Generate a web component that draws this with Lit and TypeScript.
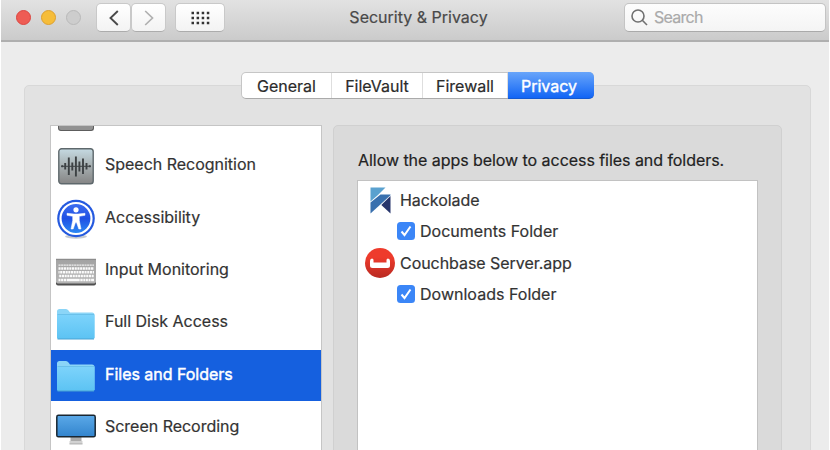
import { LitElement, html, css, svg } from "lit";
import { customElement } from "lit/decorators.js";
import { classMap } from "lit/directives/class-map.js";

const folder = (id: string) => html`<svg width="40" height="36" viewBox="0 0 40 36">
  <defs><linearGradient id=${id} x1="0" y1="0" x2="0" y2="1"><stop offset="0" stop-color="#7dd3fb"/><stop offset="1" stop-color="#5cc3f3"/></linearGradient></defs>
  <path d="M1 32V5.500Q1 3 3.500 3H10Q11.500 3 12.500 4.500L14 6.500H36Q38.500 6.500 38.500 9V32Z" fill="#8bd5f7"/>
  <path d="M1 8.500H38.500V31.500Q38.500 33 37 33H2.500Q1 33 1 31.500Z" fill="url(#${id})"/>
  <path d="M1.500 8.500H38" stroke="#65bce6" stroke-width=".8"/>
  <path d="M1.500 33H38" stroke="#4aa3d3" stroke-width="1"/>
</svg>`;

const speech = html`<svg width="36" height="37" viewBox="0 0 36 37">
  <defs><linearGradient id="sp" x1="0" y1="0" x2="0" y2="1"><stop offset="0" stop-color="#c5dae2"/><stop offset=".45" stop-color="#a9b2b4"/><stop offset="1" stop-color="#858585"/></linearGradient></defs>
  <rect x=".8" y=".8" width="34.400" height="35" rx="2.800" fill="url(#sp)" stroke="#5e686c" stroke-width="1.400"/>
  <path d="M3 18.300H33" stroke="#3d4244" stroke-width="1"/>
  <path d="M4.300 17.300V19.300M7.200 15V21.500M10.800 9.500V27M14.300 14.500V22.500M17.900 8.500V28.500M21.400 13.500V23.500M25 10.500V26M28.500 15V21.500M31.700 17.300V19.300" stroke="#3d4244" stroke-width="1.900"/>
</svg>`;

const accessibility = html`<svg width="40" height="40" viewBox="0 0 40 40">
  <defs><linearGradient id="ac" x1="0" y1="0" x2="0" y2="1"><stop offset="0" stop-color="#3f6ff0"/><stop offset=".5" stop-color="#1f50e4"/><stop offset="1" stop-color="#2c8cf4"/></linearGradient></defs>
  <ellipse cx="20" cy="37.500" rx="11" ry="2.200" fill="#8e97a5" opacity=".5"/>
  <circle cx="20" cy="19.500" r="18.800" fill="#2459df"/>
  <circle cx="20" cy="19.500" r="15.500" fill="url(#ac)" stroke="#fff" stroke-width="2.200"/>
  <circle cx="20" cy="10.800" r="2.600" fill="#fff"/>
  <path d="M11 14.300L18 15H22L29 14.300V16.300L23.300 17.300V21.500L25 30H22.800L20.500 23.500H19.500L17.200 30H15L16.700 21.500V17.300L11 16.300Z" fill="#fff" stroke="#fff" stroke-width=".5"/>
</svg>`;

const keyRow = (y: number, dash: string, off: number) =>
  svg`<path d="M2.500 ${y}H38" stroke="#fbfbfb" stroke-width="2.500" stroke-dasharray=${dash} stroke-dashoffset=${off}/>`;

const keyboard = html`<svg width="40" height="30" viewBox="0 -2 40 30">
  <defs><linearGradient id="kb" x1="0" y1="0" x2="0" y2="1"><stop offset="0" stop-color="#a3a3a3"/><stop offset="1" stop-color="#b5b5b5"/></linearGradient></defs>
  <rect x="0" y="2" width="40" height="25.500" rx="2" fill="#4f4f4f"/>
  <path d="M0 1.500H40V23.500Q40 25.500 38 25.500H2Q0 25.500 0 23.500Z" fill="url(#kb)"/>
  <path d="M0 1.300H40" stroke="#7b7b7b"/>
  <path d="M2.500 7.200H38" stroke="#eee" stroke-width="1.200" stroke-dasharray="2.100 .5"/>
  ${keyRow(10.6, "2.100 .6", 0)}${keyRow(14.3, "2.100 .6", 1)}${keyRow(18, "2.100 .6", 2)}
  <path d="M2.500 22H38" stroke="#fbfbfb" stroke-width="2.700" stroke-dasharray="2 .6 2 .6 2.400 .6 13 .6 2.400 .6 2 .6 2 .6 2 .6 3"/>
</svg>`;

const display = html`<svg width="40" height="33" viewBox="0 -2 40 33">
  <defs><linearGradient id="ds" x1="0" y1="0" x2="0" y2="1"><stop offset="0" stop-color="#5ba9e8"/><stop offset="1" stop-color="#3284cd"/></linearGradient></defs>
  <path d="M14.500 23H25.500V27H14.500Z" fill="#aaa"/><path d="M13.500 27H26.500V30H13.500Z" fill="#d2d2d2"/>
  <path d="M13.500 30H26.500" stroke="#999" stroke-width=".7"/>
  <rect x=".8" y="1.300" width="38.400" height="21.500" rx="1.600" fill="url(#ds)" stroke="#192631" stroke-width="1.500"/>
</svg>`;

const hackolade = html`<svg width="21" height="27" viewBox="0 0 21 27">
  <path d="M.5 .5H15.500L8 8L.5 14.500Z" fill="#5aa1cf"/>
  <path d="M.5 26.500V15.500L10.500 7.500H20.500V8.300Z" fill="#3970ae"/>
  <path d="M20.500 9V26.500L11.300 18Z" fill="#27356c"/>
</svg>`;

const couchbase = html`<svg width="30" height="30" viewBox="0 0 30 30">
  <defs><linearGradient id="cb" x1="0" y1="0" x2="0" y2="1"><stop offset=".3" stop-color="#ee3b2c"/><stop offset="1" stop-color="#b92a22"/></linearGradient></defs>
  <circle cx="15" cy="15" r="15" fill="url(#cb)"/>
  <path d="M5 13Q5 10.500 7 10.500Q8.500 10.500 8.500 12V14.500H21.500V12Q21.500 10.500 23 10.500Q25 10.500 25 13V17.500Q25 20 22.500 20H7.500Q5 20 5 17.500Z" fill="#fff"/>
</svg>`;

@customElement("app-root")
export class AppRoot extends LitElement {
  static styles = css`
    :host { display: block; width: 830px; height: 450px; overflow: hidden; background: #fff;
      font: 400 16px/20px Inter, "Liberation Sans", sans-serif; color: #333; }
    * { box-sizing: border-box; }
    svg { display: block; flex: none; }
    .window { height: 450px; margin: 0 1px; background: #ececec; overflow: hidden; }
    .bar { height: 42px; display: grid; grid-template-columns: 1fr auto 1fr; padding: 3px 3px 0 15px;
      background: linear-gradient(#e2e2e2, #cbcbcb); border-bottom: 2px solid #afafaf; }
    .left { display: flex; align-items: flex-start; }
    .lights { display: flex; gap: 10px; padding-top: 7px; margin-right: 15px; }
    .light { width: 15px; height: 15px; border-radius: 50%; border: 1px solid #dc4540; background: #ee5c54; }
    .amber { background: #f6bd3a; border-color: #dda02f; }
    .grey { background: #cdcdcd; border-color: #b9b9b9; }
    .btn { height: 29px; border-radius: 5px; border: 1px solid #c9c9c9; border-bottom-color: #acacac;
      background: linear-gradient(#fff, #f3f3f3); display: grid; place-items: center; }
    .nav { width: 35px; }
    .all { width: 50px; margin-left: 9px; }
    .title { padding: 4px 5px 0 0; color: #494949; -webkit-text-stroke: .2px; }
    .search { justify-self: end; width: 202px; height: 29px; display: flex; align-items: center; gap: 6px; padding: 0 6px 1px;
      border: 1px solid #c4c4c4; border-bottom-color: #aaa; border-radius: 5px; background: linear-gradient(#fdfdfd, #f4f4f4); color: #aaa; }
    .search span { letter-spacing: -.75px; -webkit-text-stroke: .2px; }
    .group { position: relative; margin: 43px 18px 0 23px; height: 380px; border: 1px solid #d8d8d8; border-radius: 5px;
      background: #e2e2e2; padding: 39px 27px 0 25px; display: flex; gap: 11px; }
    .tabs { position: absolute; left: 216px; top: -14px; height: 27px; display: flex; border: 1px solid #c6c6c6;
      border-bottom-color: #aaa; border-radius: 5px; background: #fff; line-height: 26px; text-align: center; }
    .tab { border-right: 1px solid #dedede; color: #2b2b2b; -webkit-text-stroke: .2px; }
    .on { margin: -1px -1px -1px 0; line-height: 28px; border: 0; border-radius: 0 5px 5px 0; color: #fff; height: 27px;
      background: linear-gradient(#68a5fa, #1265f5); border-bottom: 1px solid #1459d1; -webkit-text-stroke: .4px; padding-right: 4px; }
    .t0 { width: 90px; } .t1 { width: 91px; } .t2 { width: 85px; } .t3 { width: 86px; }
    .side { width: 272px; height: 340px; border: 1px solid #c5c5c5; background: #fff; overflow: hidden; }
    .prev { height: 14px; padding-left: 7px; }
    .stub { width: 36px; height: 5px; background: #929292; border: 1px solid #5d5d5d; border-top: 0; border-radius: 0 0 3px 3px; }
    .row { height: 52.400px; display: flex; align-items: center; letter-spacing: -.02px; -webkit-text-stroke: .2px; }
    .pic { width: 54px; flex: none; display: grid; justify-items: center; padding-right: 4px; padding-top: 1px; }
    .label { margin-top: -3.800px; }
    .sel { background: #1560df; color: #fff; background-clip: padding-box; border-bottom: 1px solid #fff; -webkit-text-stroke: .45px; }
    .sel .label { margin-top: -3px; }
    .panel { width: 449px; height: 340px; border: 1px solid #d0d0d0; border-radius: 5px; background: #dadada; padding: 24px 23px 0; }
    .lead { padding-left: 1px; white-space: nowrap; color: #222; letter-spacing: -.05px; -webkit-text-stroke: .2px; }
    .list { margin-top: 10px; width: 401px; height: 290px; border: 1px solid #c2c2c2; background: #fff; padding-top: 3.400px; }
    .app, .perm { height: 31.300px; display: flex; align-items: center; -webkit-text-stroke: .2px; white-space: nowrap; letter-spacing: -.05px; }
    .ico { width: 42px; display: grid; place-items: center; padding-left: 2px; }
    .perm { padding-left: 39px; gap: 5px; letter-spacing: .02px; }
    .check { width: 18px; height: 18px; border-radius: 3.500px; background: #3b86f7; }
  `;

  tabs = ["General", "FileVault", "Firewall", "Privacy"];
  rows = [
    { name: "Speech Recognition", icon: speech },
    { name: "Accessibility", icon: accessibility },
    { name: "Input Monitoring", icon: keyboard },
    { name: "Full Disk Access", icon: folder("f1") },
    { name: "Files and Folders", icon: folder("f2"), sel: true },
    { name: "Screen Recording", icon: display },
  ];
  apps = [
    { name: "Hackolade", icon: hackolade, perm: "Documents Folder" },
    { name: "Couchbase Server.app", icon: couchbase, perm: "Downloads Folder" },
  ];

  render() {
    return html`<div class="window">
      <header class="bar">
        <div class="left">
          <div class="lights"><i class="light"></i><i class="light amber"></i><i class="light grey"></i></div>
          <div class="btn nav"><svg width="10" height="16" viewBox="0 0 10 16" fill="none" stroke="#4a4a4a" stroke-width="1.900"><path d="M8.800 1L1.500 8L8.800 15"/></svg></div>
          <div class="btn nav"><svg width="10" height="16" viewBox="0 0 10 16" fill="none" stroke="#b0b0b0" stroke-width="1.700"><path d="M1.200 1L8.500 8L1.200 15"/></svg></div>
          <div class="btn all"><svg width="19" height="14" viewBox="0 0 19 14" stroke="#333" stroke-width="2.500"><path stroke-dasharray="2.500 2.600" d="M.5 1.900H18.600M.5 7H18.600M.5 12.100H18.600"/></svg></div>
        </div>
        <div class="title">Security &amp; Privacy</div>
        <div class="search"><svg width="17" height="17" viewBox="0 0 17 17" fill="none" stroke="#707070" stroke-width="1.600"><circle cx="7" cy="7" r="6"/><path d="M11.300 11.300L16 16"/></svg><span>Search</span></div>
      </header>
      <main class="group">
        <nav class="tabs">${this.tabs.map((t, i) => html`<div class=${classMap({ tab: true, [`t${i}`]: true, on: i === 3 })}>${t}</div>`)}</nav>
        <section class="side">
          <div class="prev"><div class="stub"></div></div>
          ${this.rows.map((r) => html`<div class=${classMap({ row: true, sel: !!r.sel })}><div class="pic">${r.icon}</div><span class="label">${r.name}</span></div>`)}
        </section>
        <section class="panel">
          <div class="lead">Allow the apps below to access files and folders.</div>
          <div class="list">${this.apps.map((a) => html`
            <div class="app"><div class="ico">${a.icon}</div><span>${a.name}</span></div>
            <div class="perm"><svg class="check" viewBox="0 0 18 18" fill="none" stroke="#fff" stroke-width="2"><path d="M4.500 9.500L7.500 13L13.500 4.500"/></svg><span>${a.perm}</span></div>`)}
          </div>
        </section>
      </main>
    </div>`;
  }
}
